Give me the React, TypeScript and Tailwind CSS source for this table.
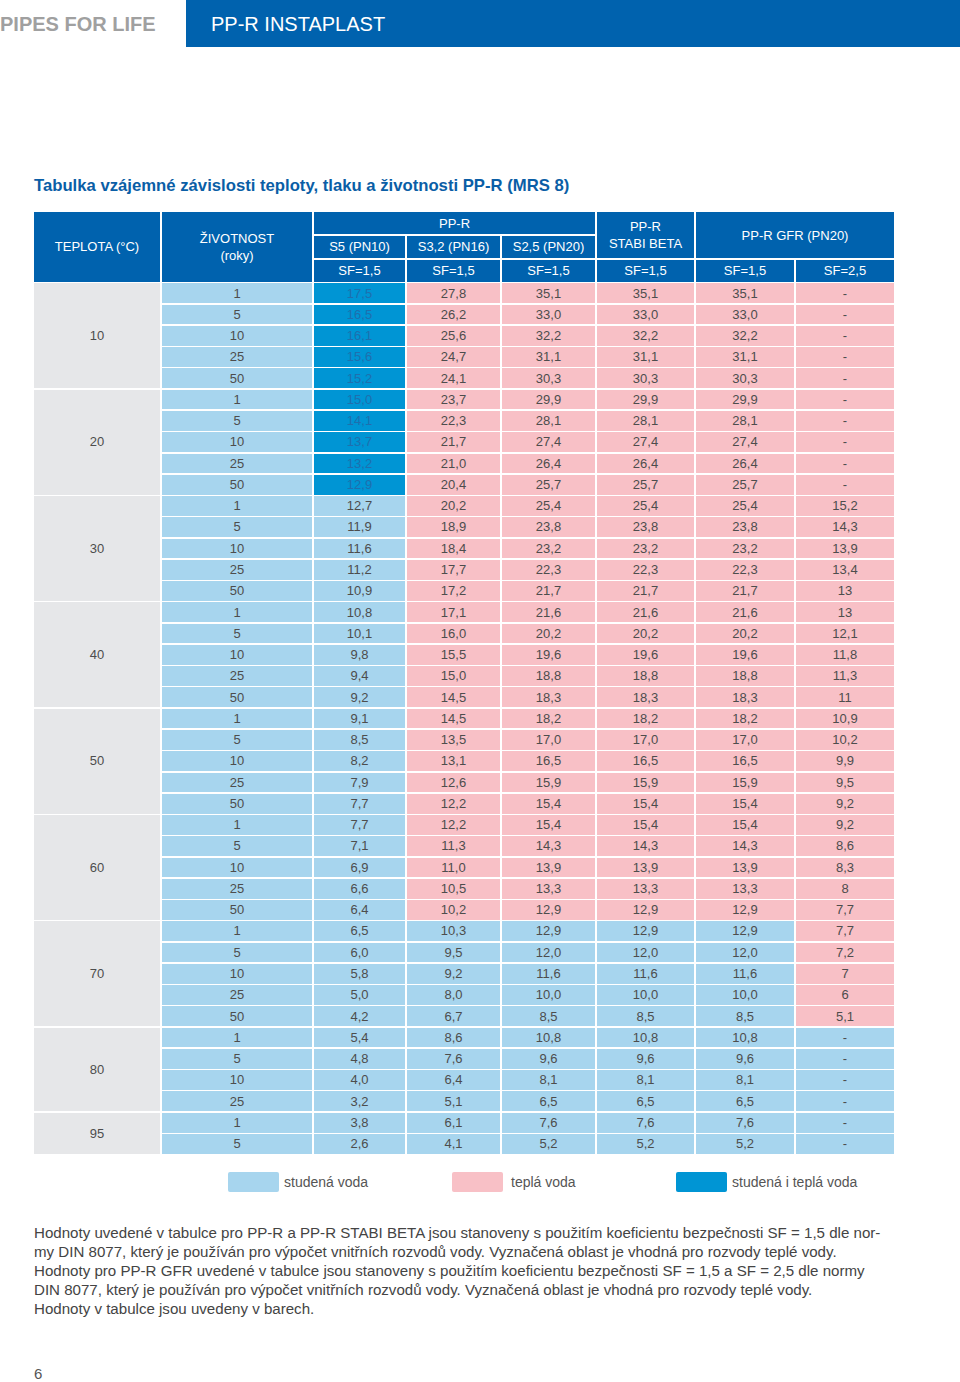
import React from "react";

type Row = [string, string, string, string, string, string, string];

const GROUPS: { temp: number; rows: Row[] }[] = [
  {
    temp: 10,
    rows: [
      ["1", "17,5", "27,8", "35,1", "35,1", "35,1", "-"],
      ["5", "16,5", "26,2", "33,0", "33,0", "33,0", "-"],
      ["10", "16,1", "25,6", "32,2", "32,2", "32,2", "-"],
      ["25", "15,6", "24,7", "31,1", "31,1", "31,1", "-"],
      ["50", "15,2", "24,1", "30,3", "30,3", "30,3", "-"],
    ],
  },
  {
    temp: 20,
    rows: [
      ["1", "15,0", "23,7", "29,9", "29,9", "29,9", "-"],
      ["5", "14,1", "22,3", "28,1", "28,1", "28,1", "-"],
      ["10", "13,7", "21,7", "27,4", "27,4", "27,4", "-"],
      ["25", "13,2", "21,0", "26,4", "26,4", "26,4", "-"],
      ["50", "12,9", "20,4", "25,7", "25,7", "25,7", "-"],
    ],
  },
  {
    temp: 30,
    rows: [
      ["1", "12,7", "20,2", "25,4", "25,4", "25,4", "15,2"],
      ["5", "11,9", "18,9", "23,8", "23,8", "23,8", "14,3"],
      ["10", "11,6", "18,4", "23,2", "23,2", "23,2", "13,9"],
      ["25", "11,2", "17,7", "22,3", "22,3", "22,3", "13,4"],
      ["50", "10,9", "17,2", "21,7", "21,7", "21,7", "13"],
    ],
  },
  {
    temp: 40,
    rows: [
      ["1", "10,8", "17,1", "21,6", "21,6", "21,6", "13"],
      ["5", "10,1", "16,0", "20,2", "20,2", "20,2", "12,1"],
      ["10", "9,8", "15,5", "19,6", "19,6", "19,6", "11,8"],
      ["25", "9,4", "15,0", "18,8", "18,8", "18,8", "11,3"],
      ["50", "9,2", "14,5", "18,3", "18,3", "18,3", "11"],
    ],
  },
  {
    temp: 50,
    rows: [
      ["1", "9,1", "14,5", "18,2", "18,2", "18,2", "10,9"],
      ["5", "8,5", "13,5", "17,0", "17,0", "17,0", "10,2"],
      ["10", "8,2", "13,1", "16,5", "16,5", "16,5", "9,9"],
      ["25", "7,9", "12,6", "15,9", "15,9", "15,9", "9,5"],
      ["50", "7,7", "12,2", "15,4", "15,4", "15,4", "9,2"],
    ],
  },
  {
    temp: 60,
    rows: [
      ["1", "7,7", "12,2", "15,4", "15,4", "15,4", "9,2"],
      ["5", "7,1", "11,3", "14,3", "14,3", "14,3", "8,6"],
      ["10", "6,9", "11,0", "13,9", "13,9", "13,9", "8,3"],
      ["25", "6,6", "10,5", "13,3", "13,3", "13,3", "8"],
      ["50", "6,4", "10,2", "12,9", "12,9", "12,9", "7,7"],
    ],
  },
  {
    temp: 70,
    rows: [
      ["1", "6,5", "10,3", "12,9", "12,9", "12,9", "7,7"],
      ["5", "6,0", "9,5", "12,0", "12,0", "12,0", "7,2"],
      ["10", "5,8", "9,2", "11,6", "11,6", "11,6", "7"],
      ["25", "5,0", "8,0", "10,0", "10,0", "10,0", "6"],
      ["50", "4,2", "6,7", "8,5", "8,5", "8,5", "5,1"],
    ],
  },
  {
    temp: 80,
    rows: [
      ["1", "5,4", "8,6", "10,8", "10,8", "10,8", "-"],
      ["5", "4,8", "7,6", "9,6", "9,6", "9,6", "-"],
      ["10", "4,0", "6,4", "8,1", "8,1", "8,1", "-"],
      ["25", "3,2", "5,1", "6,5", "6,5", "6,5", "-"],
    ],
  },
  {
    temp: 95,
    rows: [
      ["1", "3,8", "6,1", "7,6", "7,6", "7,6", "-"],
      ["5", "2,6", "4,1", "5,2", "5,2", "5,2", "-"],
    ],
  },
];

const SPAN: Record<number, string> = {
  5: "row-span-5",
  4: "row-span-4",
  2: "row-span-2",
};

const COLD = "bg-[#a7d5ee] text-[#4d4d4d]";
const HOT = "bg-[#f8c0c6] text-[#4d4d4d]";
const BOTH = "bg-[#0095d4] text-[#1f6fae]";

// colour of a value cell by column index (0 = lifetime, 1..6 = values)
function cellColor(col: number, temp: number) {
  if (col === 0) return COLD;
  if (col === 1) return temp <= 20 ? BOTH : COLD;
  if (col <= 5) return temp <= 60 ? HOT : COLD;
  return temp <= 70 ? HOT : COLD;
}

const head = "bg-[#0062ae] text-white flex items-center justify-center text-center leading-[17px]";

export default function App() {
  return (
    <div
      className="w-[960px] h-[1382px] bg-white relative text-[#4d4d4d] overflow-hidden"
      style={{ fontFamily: '"Liberation Sans", Arial, sans-serif' }}
    >
      {/* Top bar */}
      <div className="flex h-[47px]">
        <div className="w-[186px] flex items-center pt-px">
          <span className="text-[20px] font-bold text-[#a0a0a0]">PIPES FOR LIFE</span>
        </div>
        <div className="flex-1 bg-[#0062ae] flex items-center pl-[25px]">
          <span className="text-[20px] text-white">PP-R INSTAPLAST</span>
        </div>
      </div>

      <div className="px-[34px]">
        <h1 className="mt-[129px] text-[16.7px] font-bold text-[#0a5ea6] leading-[20px]">
          Tabulka vzájemné závislosti teploty, tlaku a životnosti PP-R (MRS 8)
        </h1>

        {/* Table */}
        <div className="mt-[16px] w-[860px] grid grid-cols-[126px_150px_91px_93px_93px_97px_98px_98px] grid-rows-[repeat(3,22.3px)] auto-rows-[19.78px] gap-x-[2px] gap-y-[1.5px] text-[13px]">
          <div className={`${head} row-span-3`}>TEPLOTA (°C)</div>
          <div className={`${head} row-span-3`}>
            ŽIVOTNOST
            <br />
            (roky)
          </div>
          <div className={`${head} col-span-3`}>PP-R</div>
          <div className={`${head} row-span-2`}>
            PP-R
            <br />
            STABI BETA
          </div>
          <div className={`${head} col-span-2 row-span-2`}>PP-R GFR (PN20)</div>
          <div className={head}>S5 (PN10)</div>
          <div className={head}>S3,2 (PN16)</div>
          <div className={head}>S2,5 (PN20)</div>
          <div className={head}>SF=1,5</div>
          <div className={head}>SF=1,5</div>
          <div className={head}>SF=1,5</div>
          <div className={head}>SF=1,5</div>
          <div className={head}>SF=1,5</div>
          <div className={head}>SF=2,5</div>

          {GROUPS.map((g) => (
            <React.Fragment key={g.temp}>
              <div
                className={`${SPAN[g.rows.length]} bg-[#e6e7e9] flex items-center justify-center text-[#4d4d4d]`}
              >
                {g.temp}
              </div>
              {g.rows.map((r, ri) =>
                r.map((v, ci) => (
                  <div
                    key={`${ri}-${ci}`}
                    className={`${cellColor(ci, g.temp)} flex items-center justify-center`}
                  >
                    {v}
                  </div>
                ))
              )}
            </React.Fragment>
          ))}
        </div>

        {/* Legend */}
        <div className="mt-[18px] flex items-center pl-[194px] text-[14px] text-[#555]">
          <div className="flex items-center w-[224px]">
            <div className="w-[51px] h-[20px] rounded-[2px] bg-[#a7d5ee]" />
            <span className="ml-[5px]">studená voda</span>
          </div>
          <div className="flex items-center w-[224px]">
            <div className="w-[51px] h-[20px] rounded-[2px] bg-[#f8c0c6]" />
            <span className="ml-[8px]">teplá voda</span>
          </div>
          <div className="flex items-center">
            <div className="w-[51px] h-[20px] rounded-[2px] bg-[#0095d4]" />
            <span className="ml-[5px]">studená i teplá voda</span>
          </div>
        </div>

        {/* Notes */}
        <p className="mt-[30px] text-[15.1px] leading-[19px] text-[#444] whitespace-nowrap">
          Hodnoty uvedené v tabulce pro PP-R a PP-R STABI BETA jsou stanoveny s použitím koeficientu bezpečnosti SF = 1,5 dle nor-
          <br />
          my DIN 8077, který je používán pro výpočet vnitřních rozvodů vody. Vyznačená oblast je vhodná pro rozvody teplé vody.
          <br />
          Hodnoty pro PP-R GFR uvedené v tabulce jsou stanoveny s použitím koeficientu bezpečnosti SF = 1,5 a SF = 2,5 dle normy
          <br />
          DIN 8077, který je používán pro výpočet vnitřních rozvodů vody. Vyznačená oblast je vhodná pro rozvody teplé vody.
          <br />
          Hodnoty v tabulce jsou uvedeny v barech.
        </p>

        <div className="mt-[47px] text-[15px] leading-[18px] text-[#555]">6</div>
      </div>
    </div>
  );
}
